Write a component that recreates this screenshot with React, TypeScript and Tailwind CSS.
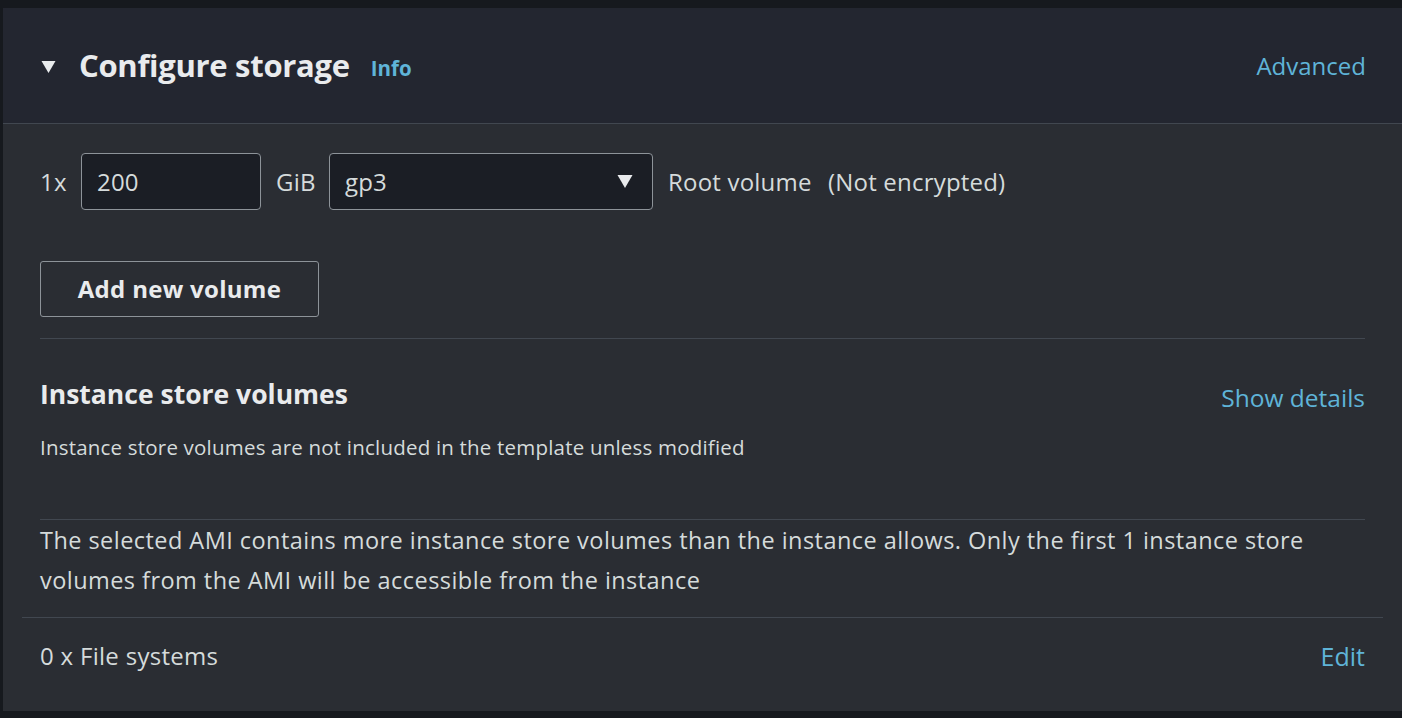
import React from 'react';

const font = { fontFamily: '"Open Sans", "Noto Sans", sans-serif' };

const Caret: React.FC<{ className?: string }> = ({ className }) => (
  <svg viewBox="0 0 16 14" className={className} fill="currentColor">
    <path d="M1 1h14L8 13z" />
  </svg>
);

const App: React.FC = () => {
  return (
    <div className="min-h-screen bg-[#16191e] pt-2 pl-[3px]" style={font}>
      <div className="bg-[#2a2d33] text-[#d5dbdb] rounded-tl-sm">
        {/* header */}
        <div className="h-[116px] bg-[#232630] border-b border-[#414750] flex items-center pl-[37px] pr-[36px]">
          <Caret className="w-[17px] h-[14px] text-[#e9ebed] mt-[2px]" />
          <h2 className="ml-[22px] text-[31px] font-bold text-[#e9ebed] tracking-[-0.3px]">Configure storage</h2>
          <span className="ml-[21px] mt-[6px] text-[20.5px] font-bold text-[#5fb4d8]">Info</span>
          <span className="ml-auto text-[24px] text-[#5fb4d8]">Advanced</span>
        </div>

        {/* body */}
        <div className="px-[37px]">
          <div className="pt-[29px] flex items-center text-[24px] tracking-[0.2px]">
            <span className="w-[41px]">1x</span>
            <div className="w-[180px] h-[57px] bg-[#1b1e25] border border-[#8d9399] rounded-[4px] flex items-center px-[15px]">200</div>
            <span className="ml-[15px] w-[53px]">GiB</span>
            <div className="w-[324px] h-[57px] bg-[#1b1e25] border border-[#8d9399] rounded-[4px] flex items-center pl-[15px] pr-[18px]">
              <span>gp3</span>
              <Caret className="ml-auto w-[18px] h-[15px] text-[#e9ebed]" />
            </div>
            <span className="ml-[15px] w-[160px]">Root volume</span>
            <span>(Not encrypted)</span>
          </div>

          <div className="pt-[51px] pb-[21px] border-b border-[#414750]">
            <button className="w-[279px] h-[56px] border border-[#8d9399] rounded-[3px] text-[24px] font-bold text-[#e9ebed] tracking-[0.3px]">
              Add new volume
            </button>
          </div>

          <div className="pt-[35px] flex items-center justify-between leading-[32px]">
            <h3 className="text-[26.5px] font-bold text-[#e9ebed]">Instance store volumes</h3>
            <span className="mt-[8px] text-[24.5px] text-[#5fb4d8]">Show details</span>
          </div>
          <p className="mt-[19px] text-[20.5px] leading-[28px] tracking-[0.2px]">
            Instance store volumes are not included in the template unless modified
          </p>

          <div className="mt-[58px] border-t border-[#414750] pb-[17px] text-[23.5px] leading-[40px] tracking-[0.45px]">
            The selected AMI contains more instance store volumes than the instance allows. Only the first 1 instance store
            <br />
            volumes from the AMI will be accessible from the instance
          </div>
        </div>

        <div className="mx-[19px] border-t border-[#414750]" />
        <div className="px-[37px] pt-[24px] pb-[41px] flex items-center justify-between leading-[28px]">
          <span className="text-[24px] tracking-[0.3px]">0 x File systems</span>
          <span className="text-[25px] text-[#5fb4d8]">Edit</span>
        </div>
      </div>
    </div>
  );
};

export default App;
